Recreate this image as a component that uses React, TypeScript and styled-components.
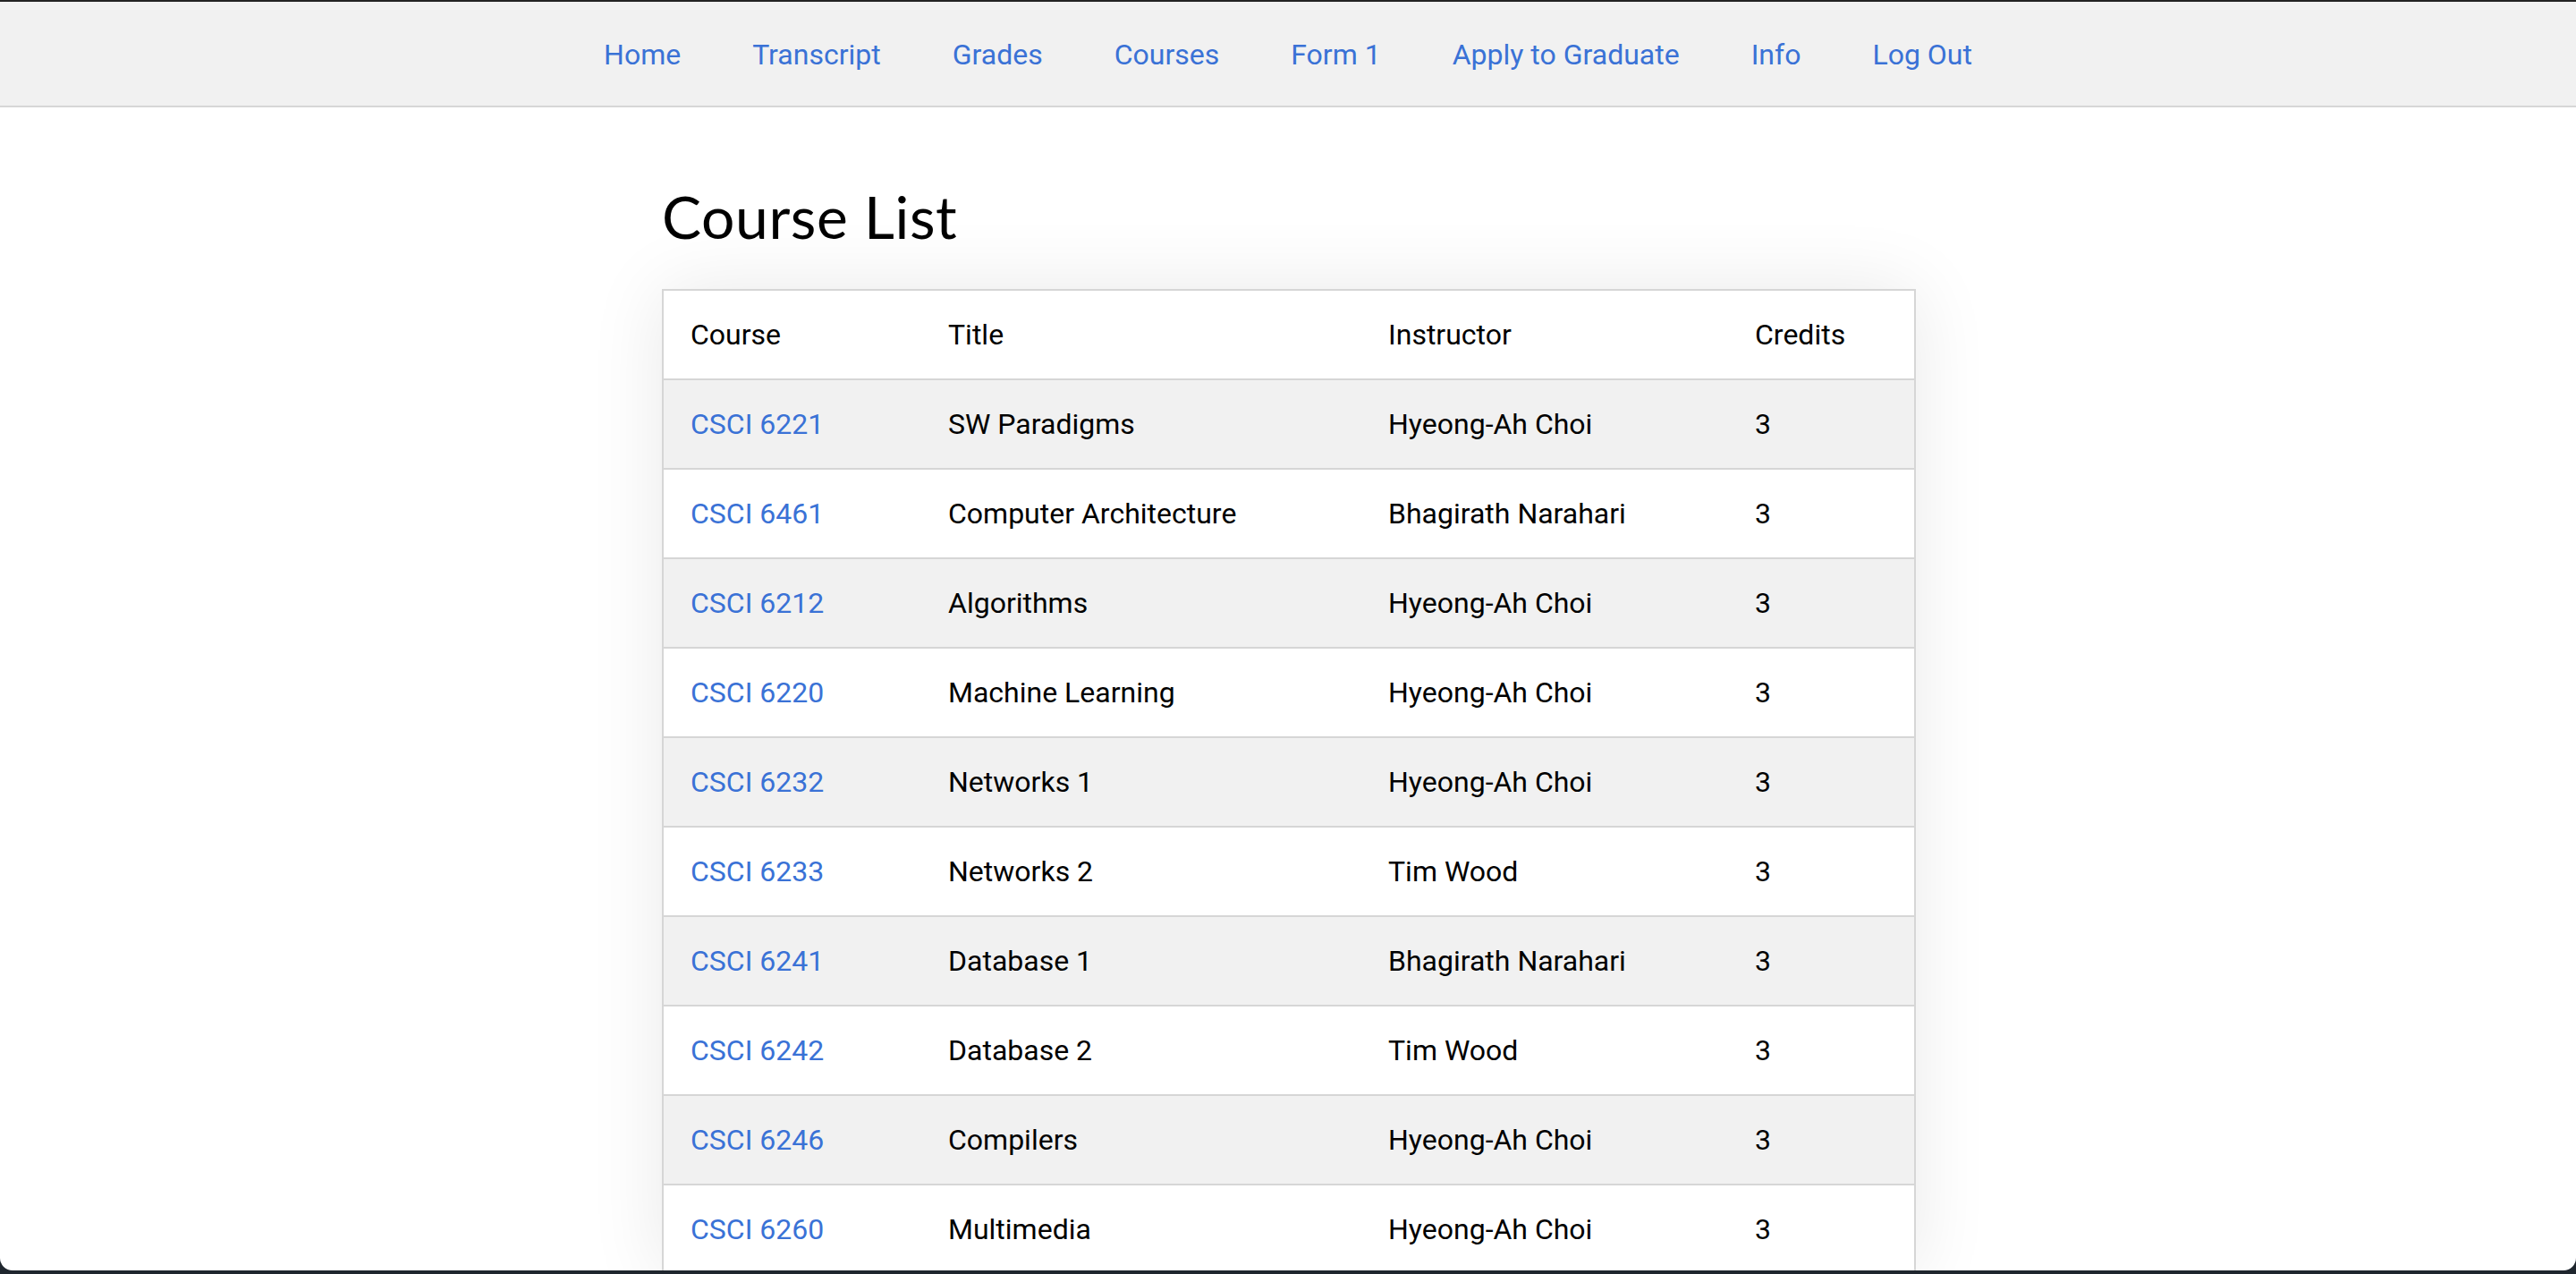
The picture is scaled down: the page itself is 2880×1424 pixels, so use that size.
import React from "react";
import styled, { createGlobalStyle } from "styled-components";

const GlobalStyle = createGlobalStyle`
  html, body {
    margin: 0;
    padding: 0;
    background: #1f262e;
    height: 1424px;
    overflow: hidden;
  }
  * { box-sizing: border-box; }
`;

const Window = styled.div`
  height: 1420px;
  background: #ffffff;
  border-top: 2px solid #232323;
  border-radius: 0 0 14px 14px;
  overflow: hidden;
  font-family: Roboto, "Liberation Sans", sans-serif;
`;

const NavBar = styled.nav`
  height: 118px;
  background: #f1f1f1;
  border-bottom: 2px solid #d6d6d6;
  display: flex;
  justify-content: center;
  align-items: center;
`;

const NavLink = styled.a`
  font-size: 32px;
  color: #3a72d6;
  text-decoration: none;
  padding: 0 40px;
  line-height: 1;
  margin-top: 2px;
`;

const Main = styled.main`
  width: 1400px;
  margin: 0 auto;
  padding-top: 82px;
`;

const Heading = styled.h1`
  margin: 0 0 42px 0;
  font-family: Lato, "Open Sans", sans-serif;
  font-weight: 400;
  font-size: 66px;
  line-height: 79px;
  color: #000;
  letter-spacing: 0.6px;
`;

const Table = styled.table`
  width: 1398px;
  border-collapse: separate;
  border-spacing: 0;
  border: 2px solid #d6d6d6;
  border-bottom: none;
  box-shadow: 0 0 80px rgba(0, 0, 0, 0.09);
  table-layout: fixed;
  font-size: 32px;
  color: #000;
`;

const Row = styled.tr<{ $shade?: boolean }>`
  background: ${(p) => (p.$shade ? "#f1f1f1" : "#ffffff")};
`;

const HeadCell = styled.th<{ $w: number }>`
  width: ${(p) => p.$w}px;
  height: 100px;
  padding: 0 0 0 30px;
  text-align: left;
  font-weight: 400;
  border-bottom: 2px solid #d6d6d6;
`;

const Cell = styled.td`
  height: 100px;
  padding: 0 0 0 30px;
  border-bottom: 2px solid #d6d6d6;
  white-space: nowrap;
`;

const CourseLink = styled.a`
  color: #3a72d6;
  text-decoration: none;
`;

const navItems = [
  "Home",
  "Transcript",
  "Grades",
  "Courses",
  "Form 1",
  "Apply to Graduate",
  "Info",
  "Log Out",
];

const courses = [
  ["CSCI 6221", "SW Paradigms", "Hyeong-Ah Choi", "3"],
  ["CSCI 6461", "Computer Architecture", "Bhagirath Narahari", "3"],
  ["CSCI 6212", "Algorithms", "Hyeong-Ah Choi", "3"],
  ["CSCI 6220", "Machine Learning", "Hyeong-Ah Choi", "3"],
  ["CSCI 6232", "Networks 1", "Hyeong-Ah Choi", "3"],
  ["CSCI 6233", "Networks 2", "Tim Wood", "3"],
  ["CSCI 6241", "Database 1", "Bhagirath Narahari", "3"],
  ["CSCI 6242", "Database 2", "Tim Wood", "3"],
  ["CSCI 6246", "Compilers", "Hyeong-Ah Choi", "3"],
  ["CSCI 6260", "Multimedia", "Hyeong-Ah Choi", "3"],
];

export default function App() {
  return (
    <>
      <GlobalStyle />
      <Window>
        <NavBar>
          {navItems.map((n) => (
            <NavLink key={n} href="#">
              {n}
            </NavLink>
          ))}
        </NavBar>
        <Main>
          <Heading>Course List</Heading>
          <Table>
            <thead>
              <Row>
                <HeadCell $w={288}>Course</HeadCell>
                <HeadCell $w={492}>Title</HeadCell>
                <HeadCell $w={410}>Instructor</HeadCell>
                <HeadCell $w={208}>Credits</HeadCell>
              </Row>
            </thead>
            <tbody>
              {courses.map((c, i) => (
                <Row key={c[0]} $shade={i % 2 === 0}>
                  <Cell>
                    <CourseLink href="#">{c[0]}</CourseLink>
                  </Cell>
                  <Cell>{c[1]}</Cell>
                  <Cell>{c[2]}</Cell>
                  <Cell>{c[3]}</Cell>
                </Row>
              ))}
            </tbody>
          </Table>
        </Main>
      </Window>
    </>
  );
}
